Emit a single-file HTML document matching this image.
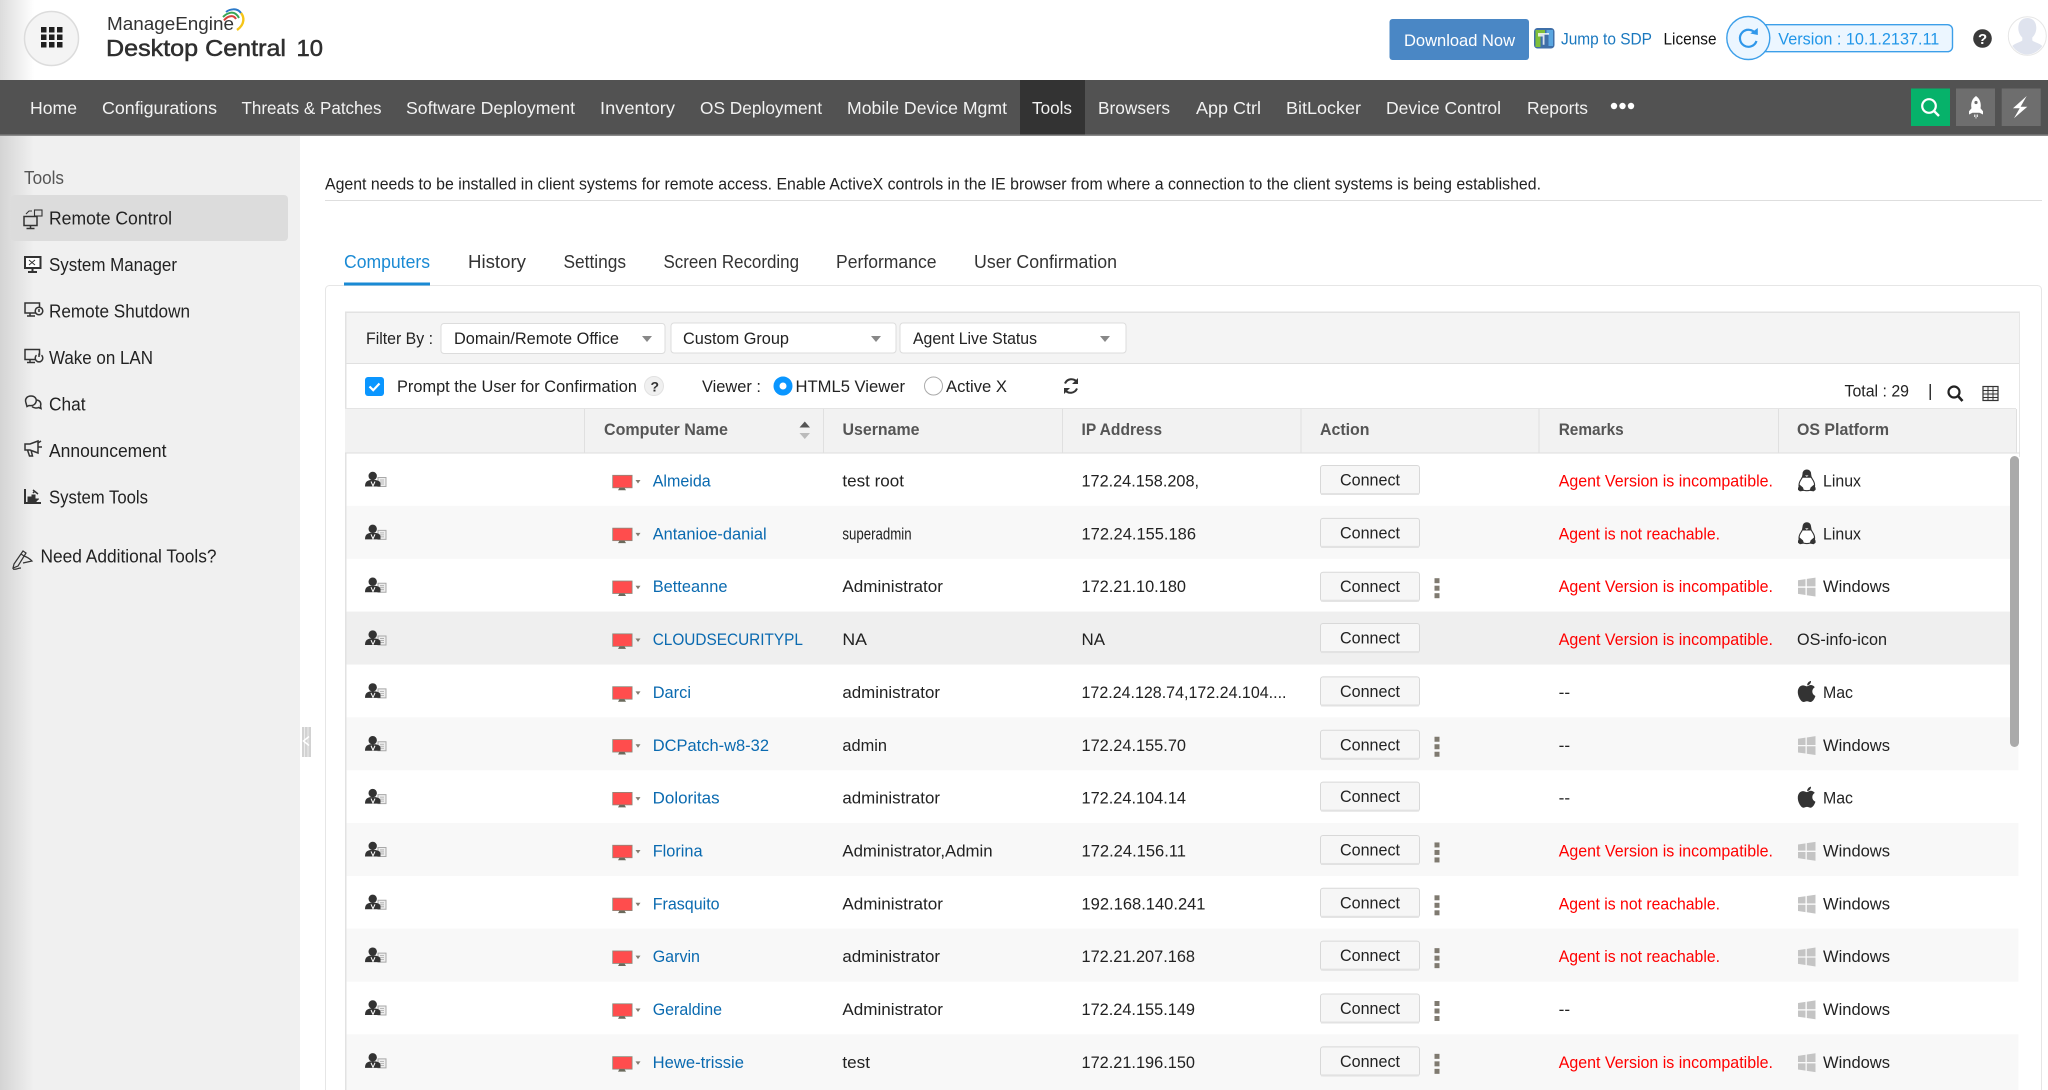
<!DOCTYPE html>
<html lang="en"><head><meta charset="utf-8"><title>Desktop Central 10</title>
<style>
html,body{margin:0;padding:0;background:#fff;width:2048px;height:1090px;overflow:hidden}
svg{display:block;font-family:"Liberation Sans",sans-serif}
text{white-space:pre}
.n{font-size:17.5px;fill:#f2f2f2}
.s{font-size:18px;fill:#222}
.t{font-size:18px;fill:#333}
.f{font-size:16.5px;fill:#222}
.h{font-size:16.5px;fill:#555;font-weight:bold}
.r{font-size:16.5px;fill:#222}
.l{font-size:16.5px;fill:#0a6ab0}
.e{font-size:16.5px;fill:#f00}
.c{font-size:16.5px;fill:#222}
.ic{fill:none;stroke:#333;stroke-width:1.5}
</style></head><body>
<svg width="2048" height="1090" viewBox="0 0 2048 1090" xmlns="http://www.w3.org/2000/svg">
<defs>
<linearGradient id="hg" x1="0" x2="1" y1="0" y2="0"><stop offset="0" stop-color="#dcdcdc"/><stop offset="1" stop-color="#fff"/></linearGradient>
<linearGradient id="sg" x1="0" x2="1" y1="0" y2="0"><stop offset="0" stop-color="#d4d4d4"/><stop offset="1" stop-color="#f0f0f0"/></linearGradient>
<g id="rowicons">
<circle cx="372.700" cy="23" r="4.200" fill="#333"/>
<path d="M378 24.500h8v9h-8z" fill="#eee" stroke="#a8a8a8" stroke-width="1"/>
<path d="M380 27h4M380 29h4M380 31h4" stroke="#a8a8a8" stroke-width=".8"/>
<path d="M365 33.500c0-4.500 2-6 5.500-6.500h5c3 .5 4.500 1.500 5 3v3.500z" fill="#333"/>
<path d="M371 28.500l2 4.500 2-4.500" fill="none" stroke="#fff" stroke-width="1"/>
<rect x="612.700" y="22.300" width="19.400" height="12.500" fill="#ff4d4d" stroke="#8a8a7c" stroke-width=".8"/>
<path d="M618 37.300h8l-1.500-2.500h-5z" fill="#6a6a5c"/>
<path d="M635.500 27h5l-2.500 3.500z" fill="#807c70"/>
</g>
<g id="conn"><rect x="1320.500" y=".5" width="99" height="29" rx="2.500" fill="#f6f6f6" stroke="#d8d8d8"/><rect x="1321" y="28" width="98" height="2" fill="#e2e2e2"/><text class="c" x="1340" y="20.500" textLength="60" lengthAdjust="spacingAndGlyphs">Connect</text></g>
<g id="dots"><rect x="1434.500" y="19.500" width="5" height="5" fill="#7f7a70"/><rect x="1434.500" y="27" width="5" height="5" fill="#7f7a70"/><rect x="1434.500" y="34.500" width="5" height="5" fill="#7f7a70"/></g>
<g id="linux"><path d="M1806.800 17c-2.600 0-3.800 2-3.800 4.200 0 2.400-.6 3.300-1.800 5-1.300 1.900-2.200 3.800-2.200 6 0 3 3 5.500 7.800 5.500s7.800-2.500 7.800-5.500c0-2.200-.9-4.100-2.200-6-1.200-1.700-1.800-2.600-1.800-5 0-2.200-1.200-4.200-3.800-4.200z" fill="#fff" stroke="#333" stroke-width="1.100"/><path d="M1803 21.500c0-2.700 1.500-4.500 3.800-4.500s3.800 1.800 3.800 4.500c0 1.500.2 2.300.5 3.200h-8.600c.3-.9.500-1.700.5-3.200z" fill="#333"/><path d="M1805 22.300h3.600l-1.800 1.800z" fill="#ccc"/><path d="M1798 35l1.500-3.500 3.500 3 1 3.200-4 .7-2-1.500z" fill="#333"/><path d="M1815.600 35l-1.500-3.500-3.500 3-1 3.200 4 .7 2-1.500z" fill="#333"/></g>
<g id="win"><path d="M1798 21.500l7.500-1.100v7.300h-7.500zM1806.800 20.200l8.700-1.300v8.800h-8.700zM1798 29h7.500v7.300l-7.500-1.100zM1806.800 29h8.700v8.800l-8.700-1.300z" fill="#c4c4c4"/></g>
<g id="mac"><path d="M1811 16.500c-2.300.5-3.900 2.200-3.800 4.500 2.200-.2 4-2.200 3.800-4.500zM1806.800 22c-1-.1-2.300-1-3.800-1-2.800 0-5.200 2.500-5.200 6.600 0 4.500 3.200 10 5.800 10 1.200 0 1.900-.8 3.400-.8s2 .8 3.400.8c2.300 0 4.300-3.500 5-6-2-1-3.100-2.500-3.100-4.600 0-1.800 1-3.300 2.500-4.200-1-1.400-2.500-2.200-4.200-2.200-1.700 0-2.800 1.400-3.800 1.400z" fill="#333"/></g>
</defs>

<!-- header -->
<rect width="2048" height="80" fill="#fff"/>
<rect width="34" height="80" fill="url(#hg)"/>
<circle cx="51.500" cy="38.500" r="27" fill="#f4f4f4" stroke="#dcdcdc" stroke-width="1.500"/>
<g fill="#1f1f1f"><rect x="41" y="27" width="5.500" height="5.500"/><rect x="49" y="27" width="5.500" height="5.500"/><rect x="57" y="27" width="5.500" height="5.500"/><rect x="41" y="34.500" width="5.500" height="5.500"/><rect x="49" y="34.500" width="5.500" height="5.500"/><rect x="57" y="34.500" width="5.500" height="5.500"/><rect x="41" y="42" width="5.500" height="5.500"/><rect x="49" y="42" width="5.500" height="5.500"/><rect x="57" y="42" width="5.500" height="5.500"/></g>
<text x="107" y="30" font-size="18.500" fill="#333" textLength="127" lengthAdjust="spacingAndGlyphs">ManageEngine</text>
<g fill="none">
<path d="M224 20.500c2.500-3.500 9-7 12-1.500" stroke="#d8423c" stroke-width="2"/>
<path d="M223 17c3-3 11-8.500 16 1" stroke="#3aa655" stroke-width="2"/>
<path d="M226 12c4-3 11-4.500 15 1" stroke="#2a79c9" stroke-width="2"/>
<path d="M241 13c3 3.500 4.500 11-4 17" stroke="#f5c518" stroke-width="2.400"/>
</g>
<text x="106" y="56" font-size="23" fill="#2f2f2f" stroke="#2f2f2f" stroke-width=".5" textLength="180" lengthAdjust="spacingAndGlyphs">Desktop Central</text>
<text x="296.500" y="56" font-size="23" fill="#2f2f2f" stroke="#2f2f2f" stroke-width=".5" textLength="26.500" lengthAdjust="spacingAndGlyphs">10</text>

<rect x="1389.500" y="19" width="139.500" height="41" rx="3" fill="#4a87c5"/>
<text x="1404" y="46" font-size="17" fill="#fff" textLength="111" lengthAdjust="spacingAndGlyphs">Download Now</text>
<rect x="1534" y="28" width="20.500" height="20.500" rx="3.500" fill="#3f6fa8"/>
<path d="M1535.500 30h9.500v4h-4.500v13h-5z" fill="#7fbf3a"/><path d="M1546.500 30h6.500v16h-4.500V34h-2z" fill="#5aa6e0"/><path d="M1538 33h11v1.800h-4.500v10h-1.800v-8.300H1538z" fill="#fff" opacity=".8"/>
<text x="1561" y="44.500" font-size="16.500" fill="#1a78bf" textLength="91" lengthAdjust="spacingAndGlyphs">Jump to SDP</text>
<text x="1663.500" y="44.500" font-size="16.500" fill="#111" textLength="53" lengthAdjust="spacingAndGlyphs">License</text>
<rect x="1754" y="24.700" width="198.500" height="27" rx="5" fill="#ecf6ff" stroke="#3c9fe9" stroke-width="1.400"/>
<circle cx="1748.300" cy="38" r="21.500" fill="#ecf6ff" stroke="#3c9fe9" stroke-width="1.400"/>
<path d="M1755.500 33.500a8.500 8.500 0 1 0 1 7.500" fill="none" stroke="#2f97ea" stroke-width="2.200"/>
<path d="M1750.300 33.500l7.500 1.500v-7z" fill="#2f97ea"/>
<text x="1778.300" y="44.500" font-size="16.500" fill="#2196e8" textLength="161" lengthAdjust="spacingAndGlyphs">Version : 10.1.2137.11</text>
<circle cx="1982.500" cy="38.500" r="9.300" fill="#3a3a3a"/>
<text x="1978" y="44" font-size="15" font-weight="bold" fill="#fff">?</text>
<ellipse cx="2027.300" cy="36" rx="19" ry="19.300" fill="#fff" stroke="#e6e6e6" stroke-width="1"/>
<path d="M2027.300 18c-6 0-9 4.500-9 10 0 4 1.800 7.500 4 9.500v3c-2.500 2-7 2.500-10 5.500 3.500 5 9 8.500 15 8.500s11.500-3.500 15-8.500c-3-3-7.500-3.500-10-5.500v-3c2.200-2 4-5.500 4-9.500 0-5.500-3-10-9-10z" fill="#dfe3ee"/>

<!-- nav -->
<rect y="80" width="2048" height="55" fill="#525252"/>
<rect y="134.500" width="2048" height="1.500" fill="#8a8a8a"/>
<rect x="1020" y="80" width="65" height="54.500" fill="#333"/>
<text class="n" x="30" y="114" textLength="47" lengthAdjust="spacingAndGlyphs">Home</text>
<text class="n" x="102" y="114" textLength="115" lengthAdjust="spacingAndGlyphs">Configurations</text>
<text class="n" x="241.500" y="114" textLength="140" lengthAdjust="spacingAndGlyphs">Threats &amp; Patches</text>
<text class="n" x="406" y="114" textLength="169" lengthAdjust="spacingAndGlyphs">Software Deployment</text>
<text class="n" x="600" y="114" textLength="75" lengthAdjust="spacingAndGlyphs">Inventory</text>
<text class="n" x="700" y="114" textLength="122" lengthAdjust="spacingAndGlyphs">OS Deployment</text>
<text class="n" x="847" y="114" textLength="160" lengthAdjust="spacingAndGlyphs">Mobile Device Mgmt</text>
<text class="n" x="1032" y="114" textLength="40" lengthAdjust="spacingAndGlyphs">Tools</text>
<text class="n" x="1098" y="114" textLength="72" lengthAdjust="spacingAndGlyphs">Browsers</text>
<text class="n" x="1196" y="114" textLength="65" lengthAdjust="spacingAndGlyphs">App Ctrl</text>
<text class="n" x="1286" y="114" textLength="75" lengthAdjust="spacingAndGlyphs">BitLocker</text>
<text class="n" x="1386" y="114" textLength="115" lengthAdjust="spacingAndGlyphs">Device Control</text>
<text class="n" x="1527" y="114" textLength="61" lengthAdjust="spacingAndGlyphs">Reports</text>
<g fill="#fff"><circle cx="1614" cy="106" r="3.200"/><circle cx="1622.500" cy="106" r="3.200"/><circle cx="1631" cy="106" r="3.200"/></g>
<rect x="1911" y="88.500" width="39" height="37.500" fill="#06b26a"/>
<circle cx="1929" cy="106" r="6.800" fill="none" stroke="#fff" stroke-width="2.200"/><path d="M1934 111l5 5" stroke="#fff" stroke-width="2.400"/>
<rect x="1956" y="88.500" width="39" height="37.500" fill="#6e6e6e"/>
<path d="M1976 96c-3.500 2.500-4.800 6-4.800 9.500 0 1 .1 2 .3 2.800l-2.500 3v3.200l3.500-1.800h7l3.500 1.800v-3.200l-2.500-3c.2-.8.300-1.800.3-2.800 0-3.500-1.300-7-4.800-9.500z" fill="#fff"/><circle cx="1976" cy="102.500" r="1.600" fill="#6e6e6e"/><path d="M1974.500 114.500v2.500M1976 114.500v4M1977.500 114.500v2.500" stroke="#ddd" stroke-width="1"/>
<rect x="2001.700" y="88.500" width="39" height="37.500" fill="#6e6e6e"/>
<path d="M2026.700 96L2013 108.300h6.700L2014 118.300l13.300-11.600h-6.700z" fill="#fff"/>

<!-- sidebar -->
<rect y="136" width="300" height="954" fill="#f0f0f0"/>
<rect y="136" width="34" height="954" fill="url(#sg)"/>
<text x="24" y="184" font-size="18" fill="#555" textLength="40" lengthAdjust="spacingAndGlyphs">Tools</text>
<rect x="11" y="195" width="277" height="46" rx="4" fill="#dcdcdc"/>
<g class="ic">
<rect x="24" y="216.500" width="13" height="9"/><path d="M30.500 225.500v2.500M26.500 228.500h8"/><rect x="34.500" y="210" width="7.500" height="6" stroke-width="1.100"/><path d="M26 214l3-3h3" stroke-width="1.100"/>
<rect x="25" y="257" width="15.500" height="11" stroke-width="2" fill="#fff"/><path d="M29 260l6 5M35 260l-6 5" stroke-width="1"/><path d="M32.500 268v3M28 272h9" stroke-width="2"/>
<rect x="25" y="303" width="14.500" height="10"/><path d="M30 313.500v2M27 316h8"/><circle cx="39" cy="311" r="3.800" fill="#eee"/><path d="M39 309v3"/>
<rect x="25" y="349.500" width="14.500" height="10"/><path d="M30 360v2M27 362.500h8"/><path d="M36.500 355.200a3.800 3.800 0 1 0 5 0M39 353.500v3.500" fill="#f0f0f0"/>
<path d="M26 403c-1.500-4 1-7 5-7s6 3 5 6-4 4-7 3.500l-2 1z"/><path d="M37 400c3 .5 4.500 3 3.500 6l.5 2.500-2.500-1c-2 1-5 .5-6.500-1"/>
<path d="M25 444h5l8-3v12l-8-3h-5zM27.500 450l2 6h3l-1.500-6M38 443l3-2M38 447h4"/>
<path d="M25 489v14h16" stroke-width="2"/><path d="M28 502v-5h3v5zM32 502v-7h3v7zM36 502v-3h3" fill="#333" stroke-width="1"/><path d="M33 490l5 4M33 493l2-2"/>
<path d="M14 564l9-13 3 2-8 13-5 2zM21 554l3 2M24 556c3 1 6 3 8 5l-9 2M13 569c3 1 5-1 8-1" stroke-width="1.200"/>
</g>
<text class="s" x="49" y="224.500" textLength="123" lengthAdjust="spacingAndGlyphs">Remote Control</text>
<text class="s" x="49" y="271" textLength="128" lengthAdjust="spacingAndGlyphs">System Manager</text>
<text class="s" x="49" y="317.500" textLength="141" lengthAdjust="spacingAndGlyphs">Remote Shutdown</text>
<text class="s" x="49" y="364" textLength="104" lengthAdjust="spacingAndGlyphs">Wake on LAN</text>
<text class="s" x="49" y="410.500" textLength="36.500" lengthAdjust="spacingAndGlyphs">Chat</text>
<text class="s" x="49" y="457" textLength="117.500" lengthAdjust="spacingAndGlyphs">Announcement</text>
<text class="s" x="49" y="503.500" textLength="99" lengthAdjust="spacingAndGlyphs">System Tools</text>
<text class="s" x="40.500" y="562.500" textLength="176" lengthAdjust="spacingAndGlyphs">Need Additional Tools?</text>
<rect x="302" y="727" width="9" height="30" fill="#d2d2d2"/><path d="M304.500 727v30M308 727v30" stroke="#ececec" stroke-width="1"/><path d="M309 736.500l-5.500 4.500 5.500 4.500" fill="none" stroke="#fff" stroke-width="1.500"/>

<!-- notice -->
<text x="325" y="189.500" font-size="16.500" fill="#222" textLength="1216" lengthAdjust="spacingAndGlyphs">Agent needs to be installed in client systems for remote access. Enable ActiveX controls in the IE browser from where a connection to the client systems is being established.</text>
<rect x="325" y="200" width="1717" height="1" fill="#dedede"/>

<!-- tabs -->
<text x="344" y="268" font-size="18" fill="#1a8ad4" textLength="86" lengthAdjust="spacingAndGlyphs">Computers</text>
<text class="t" x="468" y="268" textLength="58" lengthAdjust="spacingAndGlyphs">History</text>
<text class="t" x="563.500" y="268" textLength="62.500" lengthAdjust="spacingAndGlyphs">Settings</text>
<text class="t" x="663.500" y="268" textLength="135.500" lengthAdjust="spacingAndGlyphs">Screen Recording</text>
<text class="t" x="836" y="268" textLength="100.500" lengthAdjust="spacingAndGlyphs">Performance</text>
<text class="t" x="974" y="268" textLength="143" lengthAdjust="spacingAndGlyphs">User Confirmation</text>
<rect x="325.500" y="285.500" width="1716" height="820" rx="4" fill="#fff" stroke="#e6e6e6"/>
<rect x="344" y="282.500" width="86" height="3" fill="#1a8ad4"/>

<!-- filter bar -->
<rect x="345" y="312" width="1675" height="51" fill="#f4f4f4"/>
<rect x="345" y="311.500" width="1675" height="1.500" fill="#e2e2e2"/>
<rect x="345" y="363" width="1675" height="1" fill="#e0e0e0"/>
<rect x="345" y="312" width="1.500" height="800" fill="#e2e2e2"/>
<rect x="2019" y="312" width="1" height="145" fill="#e6e6e6"/>
<text class="f" x="366" y="344" textLength="67" lengthAdjust="spacingAndGlyphs">Filter By :</text>
<rect x="441" y="323.500" width="224" height="30" rx="3" fill="#fff" stroke="#dcdcdc"/>
<rect x="671" y="323" width="225" height="30" rx="3" fill="#fff" stroke="#dcdcdc"/>
<rect x="900" y="323" width="226" height="30" rx="3" fill="#fff" stroke="#dcdcdc"/>
<text class="f" x="454" y="344" textLength="165" lengthAdjust="spacingAndGlyphs">Domain/Remote Office</text>
<text class="f" x="683" y="344" textLength="106" lengthAdjust="spacingAndGlyphs">Custom Group</text>
<text class="f" x="913" y="344" textLength="124" lengthAdjust="spacingAndGlyphs">Agent Live Status</text>
<g fill="#888"><path d="M642 336h10l-5 6z"/><path d="M871 336h10l-5 6z"/><path d="M1100 336h10l-5 6z"/></g>

<!-- options -->
<rect x="365" y="377" width="19" height="19" rx="3" fill="#0a96ff"/>
<path d="M369.500 386.500l3.700 3.700 6.300-6.700" fill="none" stroke="#fff" stroke-width="2.200"/>
<text class="f" x="397" y="392" textLength="240" lengthAdjust="spacingAndGlyphs">Prompt the User for Confirmation</text>
<circle cx="654" cy="386" r="9.500" fill="#f0f0f0" stroke="#e2e2e2"/>
<text x="650.500" y="391.500" font-size="14" font-weight="bold" fill="#333">?</text>
<text class="f" x="702" y="392" textLength="59" lengthAdjust="spacingAndGlyphs">Viewer :</text>
<circle cx="783" cy="386" r="6.500" fill="#fff" stroke="#0a96ff" stroke-width="6"/>
<text class="f" x="795.500" y="392" textLength="109.500" lengthAdjust="spacingAndGlyphs">HTML5 Viewer</text>
<circle cx="933.500" cy="386" r="9" fill="#fff" stroke="#aaa"/>
<text class="f" x="946" y="392" textLength="61" lengthAdjust="spacingAndGlyphs">Active X</text>
<path d="M1077 382a7 7 0 0 0-12 1.500M1065 390a7 7 0 0 0 12-1.500" fill="none" stroke="#333" stroke-width="2"/>
<path d="M1078 378v6h-6zM1064 394v-6h6z" fill="#333"/>
<text class="f" x="1844.500" y="396.500" textLength="64.500" lengthAdjust="spacingAndGlyphs">Total : 29</text>
<rect x="1929.500" y="384" width="1.500" height="16" fill="#333"/>
<circle cx="1954" cy="392" r="5.500" fill="none" stroke="#222" stroke-width="2.200"/><path d="M1958 396l4.500 5" stroke="#222" stroke-width="2.600"/>
<rect x="1983" y="386.500" width="15" height="14" fill="#f4f4f4" stroke="#333" stroke-width="1.200"/><path d="M1983 390.500h15M1983 394h15M1983 397.500h15M1988 387v13M1993 387v13" stroke="#333" stroke-width="1"/>

<!-- table header -->
<rect x="345" y="408" width="1671" height="45" fill="#f2f2f2"/>
<rect x="345" y="408" width="1671" height="1" fill="#e4e4e4"/>
<rect x="345" y="452.500" width="1675" height="1" fill="#dedede"/>
<g fill="#e0e0e0"><rect x="584" y="409" width="1" height="44"/><rect x="823" y="409" width="1" height="44"/><rect x="1062" y="409" width="1" height="44"/><rect x="1300.500" y="409" width="1" height="44"/><rect x="1538.500" y="409" width="1" height="44"/><rect x="1778" y="409" width="1" height="44"/><rect x="2016" y="409" width="1" height="44"/></g>
<text class="h" x="604" y="435" textLength="124" lengthAdjust="spacingAndGlyphs">Computer Name</text>
<text class="h" x="842.500" y="435" textLength="77" lengthAdjust="spacingAndGlyphs">Username</text>
<text class="h" x="1081.500" y="435" textLength="80.500" lengthAdjust="spacingAndGlyphs">IP Address</text>
<text class="h" x="1320" y="435" textLength="49.500" lengthAdjust="spacingAndGlyphs">Action</text>
<text class="h" x="1558.700" y="435" textLength="65" lengthAdjust="spacingAndGlyphs">Remarks</text>
<text class="h" x="1797" y="435" textLength="92" lengthAdjust="spacingAndGlyphs">OS Platform</text>
<path d="M799.500 427.500h10.500l-5.200-6z" fill="#555"/><path d="M799.500 433h10.500l-5.200 6z" fill="#bbb"/>

<!-- rows -->
<rect x="346.500" y="453.500" width="1672" height="636" fill="#fff"/>
<g transform="translate(0,453)">
<use href="#rowicons"/><use href="#conn" y="12"/>
<text class="l" x="652.700" y="33.500" textLength="58" lengthAdjust="spacingAndGlyphs">Almeida</text>
<text class="r" x="842.400" y="33.500" textLength="61.600" lengthAdjust="spacingAndGlyphs">test root</text>
<text class="r" x="1081.500" y="33.500" textLength="117.500" lengthAdjust="spacingAndGlyphs">172.24.158.208,</text>
<text class="e" x="1558.700" y="33.500" textLength="214.300" lengthAdjust="spacingAndGlyphs">Agent Version is incompatible.</text>
<use href="#linux"/><text class="r" x="1823" y="33.500" textLength="38" lengthAdjust="spacingAndGlyphs">Linux</text>
</g>
<g transform="translate(0,505.850)">
<rect x="346.500" width="1672" height="53" fill="#f8f8f8"/>
<use href="#rowicons"/><use href="#conn" y="12"/>
<text class="l" x="652.700" y="33.500" textLength="113.900" lengthAdjust="spacingAndGlyphs">Antanioe-danial</text>
<text class="r" x="842.400" y="33.500" textLength="69.200" lengthAdjust="spacingAndGlyphs">superadmin</text>
<text class="r" x="1081.500" y="33.500" textLength="114.500" lengthAdjust="spacingAndGlyphs">172.24.155.186</text>
<text class="e" x="1558.700" y="33.500" textLength="161.300" lengthAdjust="spacingAndGlyphs">Agent is not reachable.</text>
<use href="#linux"/><text class="r" x="1823" y="33.500" textLength="38" lengthAdjust="spacingAndGlyphs">Linux</text>
</g>
<g transform="translate(0,558.700)">
<use href="#rowicons"/><use href="#conn" y="13"/><use href="#dots"/>
<text class="l" x="652.700" y="33.500" textLength="74.800" lengthAdjust="spacingAndGlyphs">Betteanne</text>
<text class="r" x="842.400" y="33.500" textLength="100.600" lengthAdjust="spacingAndGlyphs">Administrator</text>
<text class="r" x="1081.500" y="33.500" textLength="104.500" lengthAdjust="spacingAndGlyphs">172.21.10.180</text>
<text class="e" x="1558.700" y="33.500" textLength="214.300" lengthAdjust="spacingAndGlyphs">Agent Version is incompatible.</text>
<use href="#win"/><text class="r" x="1823" y="33.500" textLength="67" lengthAdjust="spacingAndGlyphs">Windows</text>
</g>
<g transform="translate(0,611.550)">
<rect x="346.500" width="1672" height="53" fill="#efefef"/>
<use href="#rowicons"/><use href="#conn" y="11.500"/>
<text class="l" x="652.700" y="33.500" textLength="150.300" lengthAdjust="spacingAndGlyphs">CLOUDSECURITYPL</text>
<text class="r" x="842.400" y="33.500" textLength="24.600" lengthAdjust="spacingAndGlyphs">NA</text>
<text class="r" x="1081.500" y="33.500" textLength="23.500" lengthAdjust="spacingAndGlyphs">NA</text>
<text class="e" x="1558.700" y="33.500" textLength="214.300" lengthAdjust="spacingAndGlyphs">Agent Version is incompatible.</text>
<text class="r" x="1797" y="33.500" textLength="90" lengthAdjust="spacingAndGlyphs">OS-info-icon</text>
</g>
<g transform="translate(0,664.400)">
<use href="#rowicons"/><use href="#conn" y="12"/>
<text class="l" x="652.700" y="33.500" textLength="38.300" lengthAdjust="spacingAndGlyphs">Darci</text>
<text class="r" x="842.400" y="33.500" textLength="97.600" lengthAdjust="spacingAndGlyphs">administrator</text>
<text class="r" x="1081.500" y="33.500" textLength="205" lengthAdjust="spacingAndGlyphs">172.24.128.74,172.24.104....</text>
<text class="r" x="1558.700" y="33.500" textLength="11.500" lengthAdjust="spacingAndGlyphs">--</text>
<use href="#mac"/><text class="r" x="1823" y="33.500" textLength="30" lengthAdjust="spacingAndGlyphs">Mac</text>
</g>
<g transform="translate(0,717.250)">
<rect x="346.500" width="1672" height="53" fill="#f8f8f8"/>
<use href="#rowicons"/><use href="#conn" y="12.500"/><use href="#dots"/>
<text class="l" x="652.700" y="33.500" textLength="116.300" lengthAdjust="spacingAndGlyphs">DCPatch-w8-32</text>
<text class="r" x="842.400" y="33.500" textLength="44.600" lengthAdjust="spacingAndGlyphs">admin</text>
<text class="r" x="1081.500" y="33.500" textLength="104.500" lengthAdjust="spacingAndGlyphs">172.24.155.70</text>
<text class="r" x="1558.700" y="33.500" textLength="11.500" lengthAdjust="spacingAndGlyphs">--</text>
<use href="#win"/><text class="r" x="1823" y="33.500" textLength="67" lengthAdjust="spacingAndGlyphs">Windows</text>
</g>
<g transform="translate(0,770.100)">
<use href="#rowicons"/><use href="#conn" y="11.500"/>
<text class="l" x="652.700" y="33.500" textLength="66.900" lengthAdjust="spacingAndGlyphs">Doloritas</text>
<text class="r" x="842.400" y="33.500" textLength="97.600" lengthAdjust="spacingAndGlyphs">administrator</text>
<text class="r" x="1081.500" y="33.500" textLength="104.500" lengthAdjust="spacingAndGlyphs">172.24.104.14</text>
<text class="r" x="1558.700" y="33.500" textLength="11.500" lengthAdjust="spacingAndGlyphs">--</text>
<use href="#mac"/><text class="r" x="1823" y="33.500" textLength="30" lengthAdjust="spacingAndGlyphs">Mac</text>
</g>
<g transform="translate(0,822.950)">
<rect x="346.500" width="1672" height="53" fill="#f8f8f8"/>
<use href="#rowicons"/><use href="#conn" y="12"/><use href="#dots"/>
<text class="l" x="652.700" y="33.500" textLength="49.900" lengthAdjust="spacingAndGlyphs">Florina</text>
<text class="r" x="842.400" y="33.500" textLength="150.200" lengthAdjust="spacingAndGlyphs">Administrator,Admin</text>
<text class="r" x="1081.500" y="33.500" textLength="104.500" lengthAdjust="spacingAndGlyphs">172.24.156.11</text>
<text class="e" x="1558.700" y="33.500" textLength="214.300" lengthAdjust="spacingAndGlyphs">Agent Version is incompatible.</text>
<use href="#win"/><text class="r" x="1823" y="33.500" textLength="67" lengthAdjust="spacingAndGlyphs">Windows</text>
</g>
<g transform="translate(0,875.800)">
<use href="#rowicons"/><use href="#conn" y="12"/><use href="#dots"/>
<text class="l" x="652.700" y="33.500" textLength="66.900" lengthAdjust="spacingAndGlyphs">Frasquito</text>
<text class="r" x="842.400" y="33.500" textLength="100.600" lengthAdjust="spacingAndGlyphs">Administrator</text>
<text class="r" x="1081.500" y="33.500" textLength="124" lengthAdjust="spacingAndGlyphs">192.168.140.241</text>
<text class="e" x="1558.700" y="33.500" textLength="161.300" lengthAdjust="spacingAndGlyphs">Agent is not reachable.</text>
<use href="#win"/><text class="r" x="1823" y="33.500" textLength="67" lengthAdjust="spacingAndGlyphs">Windows</text>
</g>
<g transform="translate(0,928.650)">
<rect x="346.500" width="1672" height="53" fill="#f8f8f8"/>
<use href="#rowicons"/><use href="#conn" y="12"/><use href="#dots"/>
<text class="l" x="652.700" y="33.500" textLength="47.300" lengthAdjust="spacingAndGlyphs">Garvin</text>
<text class="r" x="842.400" y="33.500" textLength="97.600" lengthAdjust="spacingAndGlyphs">administrator</text>
<text class="r" x="1081.500" y="33.500" textLength="113.500" lengthAdjust="spacingAndGlyphs">172.21.207.168</text>
<text class="e" x="1558.700" y="33.500" textLength="161.300" lengthAdjust="spacingAndGlyphs">Agent is not reachable.</text>
<use href="#win"/><text class="r" x="1823" y="33.500" textLength="67" lengthAdjust="spacingAndGlyphs">Windows</text>
</g>
<g transform="translate(0,981.500)">
<use href="#rowicons"/><use href="#conn" y="12"/><use href="#dots"/>
<text class="l" x="652.700" y="33.500" textLength="69.300" lengthAdjust="spacingAndGlyphs">Geraldine</text>
<text class="r" x="842.400" y="33.500" textLength="100.600" lengthAdjust="spacingAndGlyphs">Administrator</text>
<text class="r" x="1081.500" y="33.500" textLength="113.500" lengthAdjust="spacingAndGlyphs">172.24.155.149</text>
<text class="r" x="1558.700" y="33.500" textLength="11.500" lengthAdjust="spacingAndGlyphs">--</text>
<use href="#win"/><text class="r" x="1823" y="33.500" textLength="67" lengthAdjust="spacingAndGlyphs">Windows</text>
</g>
<g transform="translate(0,1034.350)">
<rect x="346.500" width="1672" height="56" fill="#f8f8f8"/>
<use href="#rowicons"/><use href="#conn" y="12"/><use href="#dots"/>
<text class="l" x="652.700" y="33.500" textLength="91.300" lengthAdjust="spacingAndGlyphs">Hewe-trissie</text>
<text class="r" x="842.400" y="33.500" textLength="27.600" lengthAdjust="spacingAndGlyphs">test</text>
<text class="r" x="1081.500" y="33.500" textLength="113.500" lengthAdjust="spacingAndGlyphs">172.21.196.150</text>
<text class="e" x="1558.700" y="33.500" textLength="214.300" lengthAdjust="spacingAndGlyphs">Agent Version is incompatible.</text>
<use href="#win"/><text class="r" x="1823" y="33.500" textLength="67" lengthAdjust="spacingAndGlyphs">Windows</text>
</g>
<rect x="2010" y="456" width="9" height="291" rx="4.500" fill="#aaaaaa"/>
</svg>
</body></html>
